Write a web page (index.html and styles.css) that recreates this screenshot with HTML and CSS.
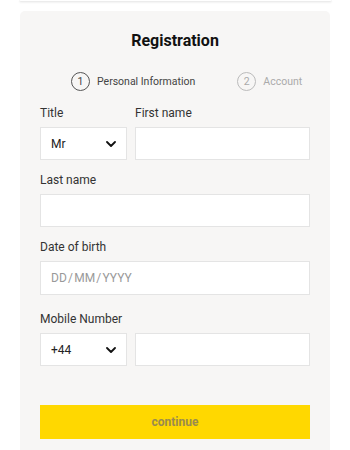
FILE: index.html
```html
<!DOCTYPE html>
<html>
<head>
<meta charset="utf-8">
<link rel="stylesheet" href="styles.css">
</head>
<body>
<div class="topcard"></div>
<div class="panel">
  <h1 class="title">Registration</h1>
  <div class="steps">
    <div class="step active"><span class="num">1</span><span class="stext">Personal Information</span></div>
    <div class="step"><span class="num">2</span><span class="stext">Account</span></div>
  </div>
  <div class="row">
    <div class="field small">
      <div class="label">Title</div>
      <div class="select"><span>Mr</span><svg width="10" height="6" viewBox="0 0 10 6"><path d="M1 1 L5 5 L9 1" fill="none" stroke="#111" stroke-width="1.8" stroke-linecap="round" stroke-linejoin="round"/></svg></div>
    </div>
    <div class="field grow">
      <div class="label">First name</div>
      <div class="input"></div>
    </div>
  </div>
  <div class="field">
    <div class="label">Last name</div>
    <div class="input"></div>
  </div>
  <div class="field dob">
    <div class="label">Date of birth</div>
    <div class="input tall"><span class="ph">DD&#8202;/&#8202;MM&#8202;/&#8202;YYYY</span></div>
  </div>
  <div class="field">
    <div class="label">Mobile Number</div>
    <div class="row nolabel">
      <div class="select small"><span>+44</span><svg width="10" height="6" viewBox="0 0 10 6"><path d="M1 1 L5 5 L9 1" fill="none" stroke="#111" stroke-width="1.8" stroke-linecap="round" stroke-linejoin="round"/></svg></div>
      <div class="input grow"></div>
    </div>
  </div>
  <button class="continue">continue</button>
</div>
</body>
</html>
```

FILE: styles.css
```css
* { box-sizing: border-box; }
body {
  margin: 0;
  background: #fff;
  font-family: Roboto, "Liberation Sans", sans-serif;
  color: #333;
}
.topcard {
  height: 2px;
  margin: 0 18px 0 19px;
  background: #fff;
  border-bottom: 1px solid #ececec;
  box-shadow: 0 1px 2px rgba(0,0,0,0.06);
  border-radius: 0 0 4px 4px;
}
.panel {
  margin: 9px 20px 0;
  background: #f7f6f5;
  border-radius: 5px;
  padding: 20px 20px 12px;
  height: 450px;
}
.title {
  margin: 0;
  text-align: center;
  font-size: 16px;
  line-height: 20px;
  font-weight: 700;
  color: #111;
}
.steps {
  display: flex;
  gap: 42px;
  margin: 20px 0 14px 31px;
  height: 20px;
  align-items: center;
}
.step {
  display: flex;
  align-items: center;
  gap: 7px;
  color: #aaa;
  font-size: 10.5px;
}
.step .num {
  width: 19px;
  height: 19px;
  border: 1px solid #bbb;
  border-radius: 50%;
  display: flex;
  align-items: center;
  justify-content: center;
  font-size: 10.5px;
}
.step.active { color: #444; }
.step.active .num { border-color: #555; }
.row {
  display: flex;
  gap: 8px;
}
.field { margin-bottom: 12px; }
.field.small { width: 87px; flex: none; }
.grow { flex: 1; }
.label {
  font-size: 12px;
  line-height: 16px;
  margin-bottom: 6px;
  color: #333;
}
.input, .select {
  height: 33px;
  background: #fff;
  border: 1px solid #e4e4e4;
  display: flex;
  align-items: center;
  padding: 0 10px;
  font-size: 12px;
  color: #222;
}
.input.tall { height: 34px; }
.select { justify-content: space-between; padding-right: 10px; }
.select.small { width: 87px; flex: none; }
.ph { color: #999; }
.dob { margin-bottom: 16px; }
.continue {
  display: block;
  width: 100%;
  height: 34px;
  margin-top: 39px;
  border: none;
  background: #ffd800;
  color: #9a8b4e;
  font-family: Roboto, "Liberation Sans", sans-serif;
  font-weight: 700;
  font-size: 12px;
}
```
